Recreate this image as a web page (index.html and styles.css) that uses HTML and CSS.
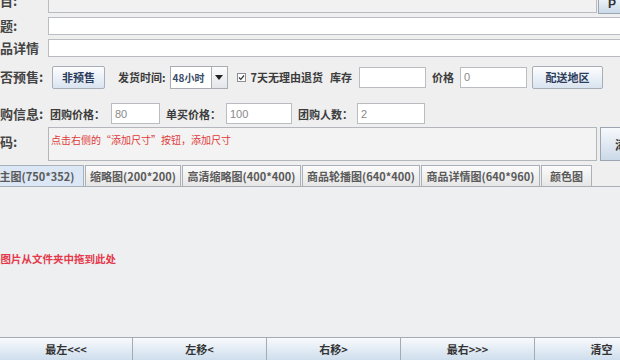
FILE: index.html
```html
<!DOCTYPE html>
<html lang="zh">
<head>
<meta charset="utf-8">
<link rel="stylesheet" href="styles.css">
</head>
<body>
<div class="app">
  <div class="form">
    <div class="row r1">
      <span class="lbl">项目:</span>
      <div class="field grey w-top"></div>
      <div class="sidebtn top"><span>P</span></div>
    </div>
    <div class="row r2">
      <span class="lbl">标题:</span>
      <div class="field wide"></div>
    </div>
    <div class="row r3">
      <span class="lbl">商品详情</span>
      <div class="field wide"></div>
    </div>
    <div class="row r4">
      <span class="lbl">是否预售:</span>
      <div class="btn presale">非预售</div>
      <span class="mlbl ship">发货时间:</span>
      <div class="combo"><span class="combo-val">48小时</span><span class="combo-arrow"><svg width="8" height="5" viewBox="0 0 8 5"><path d="M0 0h8L4 5z" fill="#222"/></svg></span></div>
      <span class="check"><svg width="9" height="9" viewBox="0 0 9 9"><rect x="0.5" y="0.5" width="8" height="8" fill="#fff" stroke="#8a8f96"/><path d="M2 4.5l1.8 1.8L7 2.5" fill="none" stroke="#333" stroke-width="1.2"/></svg></span>
      <span class="mlbl">7天无理由退货</span>
      <span class="mlbl stock">库存</span>
      <div class="field small stock-in"></div>
      <span class="mlbl price">价格</span>
      <div class="field small price-in">0</div>
      <div class="btn area">配送地区</div>
    </div>
    <div class="row r5">
      <span class="lbl">团购信息:</span>
      <span class="mlbl g1">团购价格：</span>
      <div class="field small in80">80</div>
      <span class="mlbl g2">单买价格：</span>
      <div class="field small in100">100</div>
      <span class="mlbl g3">团购人数：</span>
      <div class="field small in2">2</div>
    </div>
    <div class="row r6">
      <span class="lbl">尺码:</span>
      <div class="area-box"><span class="hint">点击右侧的“添加尺寸”按钮，添加尺寸</span></div>
      <div class="sidebtn add"><span>添加尺寸</span></div>
    </div>
  </div>

  <div class="tabs">
    <div class="tab sel t1">主图(750*352)</div>
    <div class="tab t2">缩略图(200*200)</div>
    <div class="tab t3">高清缩略图(400*400)</div>
    <div class="tab t4">商品轮播图(640*400)</div>
    <div class="tab t5">商品详情图(640*960)</div>
    <div class="tab t6">颜色图</div>
  </div>

  <div class="pane">
    <p class="drop">将图片从文件夹中拖到此处</p>
  </div>

  <div class="btnbar">
    <div class="bbtn">最左&lt;&lt;&lt;</div>
    <div class="bbtn">左移&lt;</div>
    <div class="bbtn">右移&gt;</div>
    <div class="bbtn">最右&gt;&gt;&gt;</div>
    <div class="bbtn">清空</div>
  </div>
</div>
</body>
</html>
```

FILE: styles.css
```css
html, body {
  margin: 0;
  padding: 0;
}
body {
  width: 620px;
  height: 360px;
  overflow: hidden;
  background: #efefef;
  font-family: "Noto Sans CJK SC", "Liberation Sans", sans-serif;
  font-size: 11px;
  color: #333;
}
.app {
  width: 620px;
  height: 360px;
  display: flex;
  flex-direction: column;
  overflow: hidden;
}
.form {
  display: flex;
  flex-direction: column;
  margin-left: -13px;
  width: 700px;
}
.row {
  display: flex;
  align-items: center;
  flex: none;
}
.lbl {
  width: 61px;
  flex: none;
  font-size: 13px;
  font-weight: 700;
  color: #444;
  white-space: nowrap;
  line-height: 16px;
}
.mlbl {
  font-size: 11px;
  font-weight: 700;
  color: #3c3c3c;
  white-space: nowrap;
  line-height: 14px;
}
.field {
  box-sizing: border-box;
  background: #fff;
  border: 1px solid #b9bcc0;
  font-size: 11px;
  color: #888;
  padding-left: 3px;
  display: flex;
  align-items: center;
  font-family: "Liberation Sans", sans-serif;
}
.grey { background: #f1f1f1; }
.r1 { margin-top: -5px; height: 18px; }
.r1 .lbl { margin-top: -6px; }
.w-top { width: 549px; height: 18px; }
.sidebtn {
  box-sizing: border-box;
  border: 1px solid #9ba6b2;
  background: linear-gradient(#f6f9fc, #cbd9e8);
  font-size: 12px;
  font-weight: 700;
  color: #333;
  overflow: hidden;
  white-space: nowrap;
}
.sidebtn.top {
  width: 30px;
  height: 20px;
  margin-left: 1px;
  padding-left: 9px;
  line-height: 18px;
  font-family: "Liberation Sans", sans-serif;
}
.r2 { margin-top: 4px; height: 18px; }
.r3 { margin-top: 4px; height: 18px; }
.wide { width: 620px; height: 18px; }

.r4 { margin-top: 8px; height: 24px; }
.btn {
  box-sizing: border-box;
  border: 1px solid #a7aeb8;
  border-radius: 2px;
  background: linear-gradient(#fdfdfe, #d9e4f0);
  font-size: 11px;
  font-weight: 700;
  color: #2c3c5c;
  display: flex;
  align-items: center;
  justify-content: center;
}
.presale { width: 53px; height: 23px; margin-left: 4px; }
.ship { margin-left: 13px; }
.combo {
  display: flex;
  height: 23px;
  margin-left: 4px;
  box-sizing: border-box;
  border: 1px solid #a9adb3;
  background: #fff;
}
.combo-val {
  width: 41px;
  font-size: 10px;
  color: #3a4a66;
  display: flex;
  align-items: center;
  padding-left: 2px;
  box-sizing: border-box;
  border-right: 1px solid #a9adb3;
  font-weight: 700;
}
.combo-arrow {
  width: 15px;
  display: flex;
  align-items: center;
  justify-content: center;
  background: linear-gradient(#fbfbfb, #e3e6ea);
}
.check { margin-left: 9px; margin-right: 5px; display: flex; }
.stock { margin-left: 7px; }
.small { height: 21px; }
.stock-in { width: 67px; margin-left: 7px; }
.price { margin-left: 6px; }
.price-in { width: 67px; margin-left: 6px; }
.area { width: 71px; height: 23px; margin-left: 5px; }

.r5 { margin-top: 14px; height: 21px; }
.g1 { margin-left: 2px; }
.in80 { width: 49px; margin-left: 6px; }
.g2 { margin-left: 6px; }
.in100 { width: 66px; margin-left: 5px; }
.g3 { margin-left: 6px; }
.in2 { width: 68px; margin-left: 4px; }

.r6 { margin-top: 3px; height: 34px; align-items: stretch; }
.r6 .lbl { display: flex; align-items: center; padding-bottom: 4px; }
.area-box {
  box-sizing: border-box;
  width: 549px;
  border: 1px solid #b3b6ba;
  background: #f3f3f3;
  padding: 5px 0 0 2px;
  font-size: 10px;
  line-height: 14px;
}
.hint {
  font-size: 10px;
  color: #e03a3a;
  line-height: 14px;
  white-space: nowrap;
  display: block;
}
.sidebtn.add {
  width: 40px;
  margin-left: 3px;
  padding-left: 14px;
  display: flex;
  align-items: center;
}

.tabs {
  display: flex;
  gap: 1px;
  margin-top: 4px;
  margin-left: -10px;
  height: 21px;
  border-bottom: 1px solid #a9b0b8;
  flex: none;
}
.tab {
  flex: none;
  box-sizing: border-box;
  height: 21px;
  border: 1px solid #aab1b9;
  border-bottom: none;
  background: linear-gradient(#fbfbfb, #e6e6e6);
  font-size: 11px;
  font-weight: 700;
  color: #5a5a5a;
  display: flex;
  align-items: center;
  justify-content: center;
  white-space: nowrap;
}
.tab.sel { background: #dbe7f4; }
.t1 { width: 94px; }
.t2 { width: 96px; }
.t3 { width: 119px; }
.t4 { width: 118px; }
.t5 { width: 119px; }
.t6 { width: 51px; }

.pane {
  flex: none;
  height: 150px;
  background: #eeeff1;
  display: flex;
  align-items: center;
}
.drop {
  margin: 0 0 0 -10px;
  font-size: 10.5px;
  color: #e4394a;
  white-space: nowrap;
  font-weight: 700;
  padding-bottom: 8px;
}

.btnbar {
  display: flex;
  margin-left: -1px;
  flex: none;
  height: 24px;
}
.bbtn {
  flex: none;
  box-sizing: border-box;
  width: 134px;
  height: 24px;
  border: 1px solid #a2acb6;
  border-left: none;
  background: linear-gradient(#f8fafc, #cfdeed);
  font-size: 11px;
  font-weight: 700;
  color: #333;
  display: flex;
  align-items: center;
  justify-content: center;
  white-space: nowrap;
}
.bbtn:first-child { border-left: 1px solid #a2acb6; }
```
